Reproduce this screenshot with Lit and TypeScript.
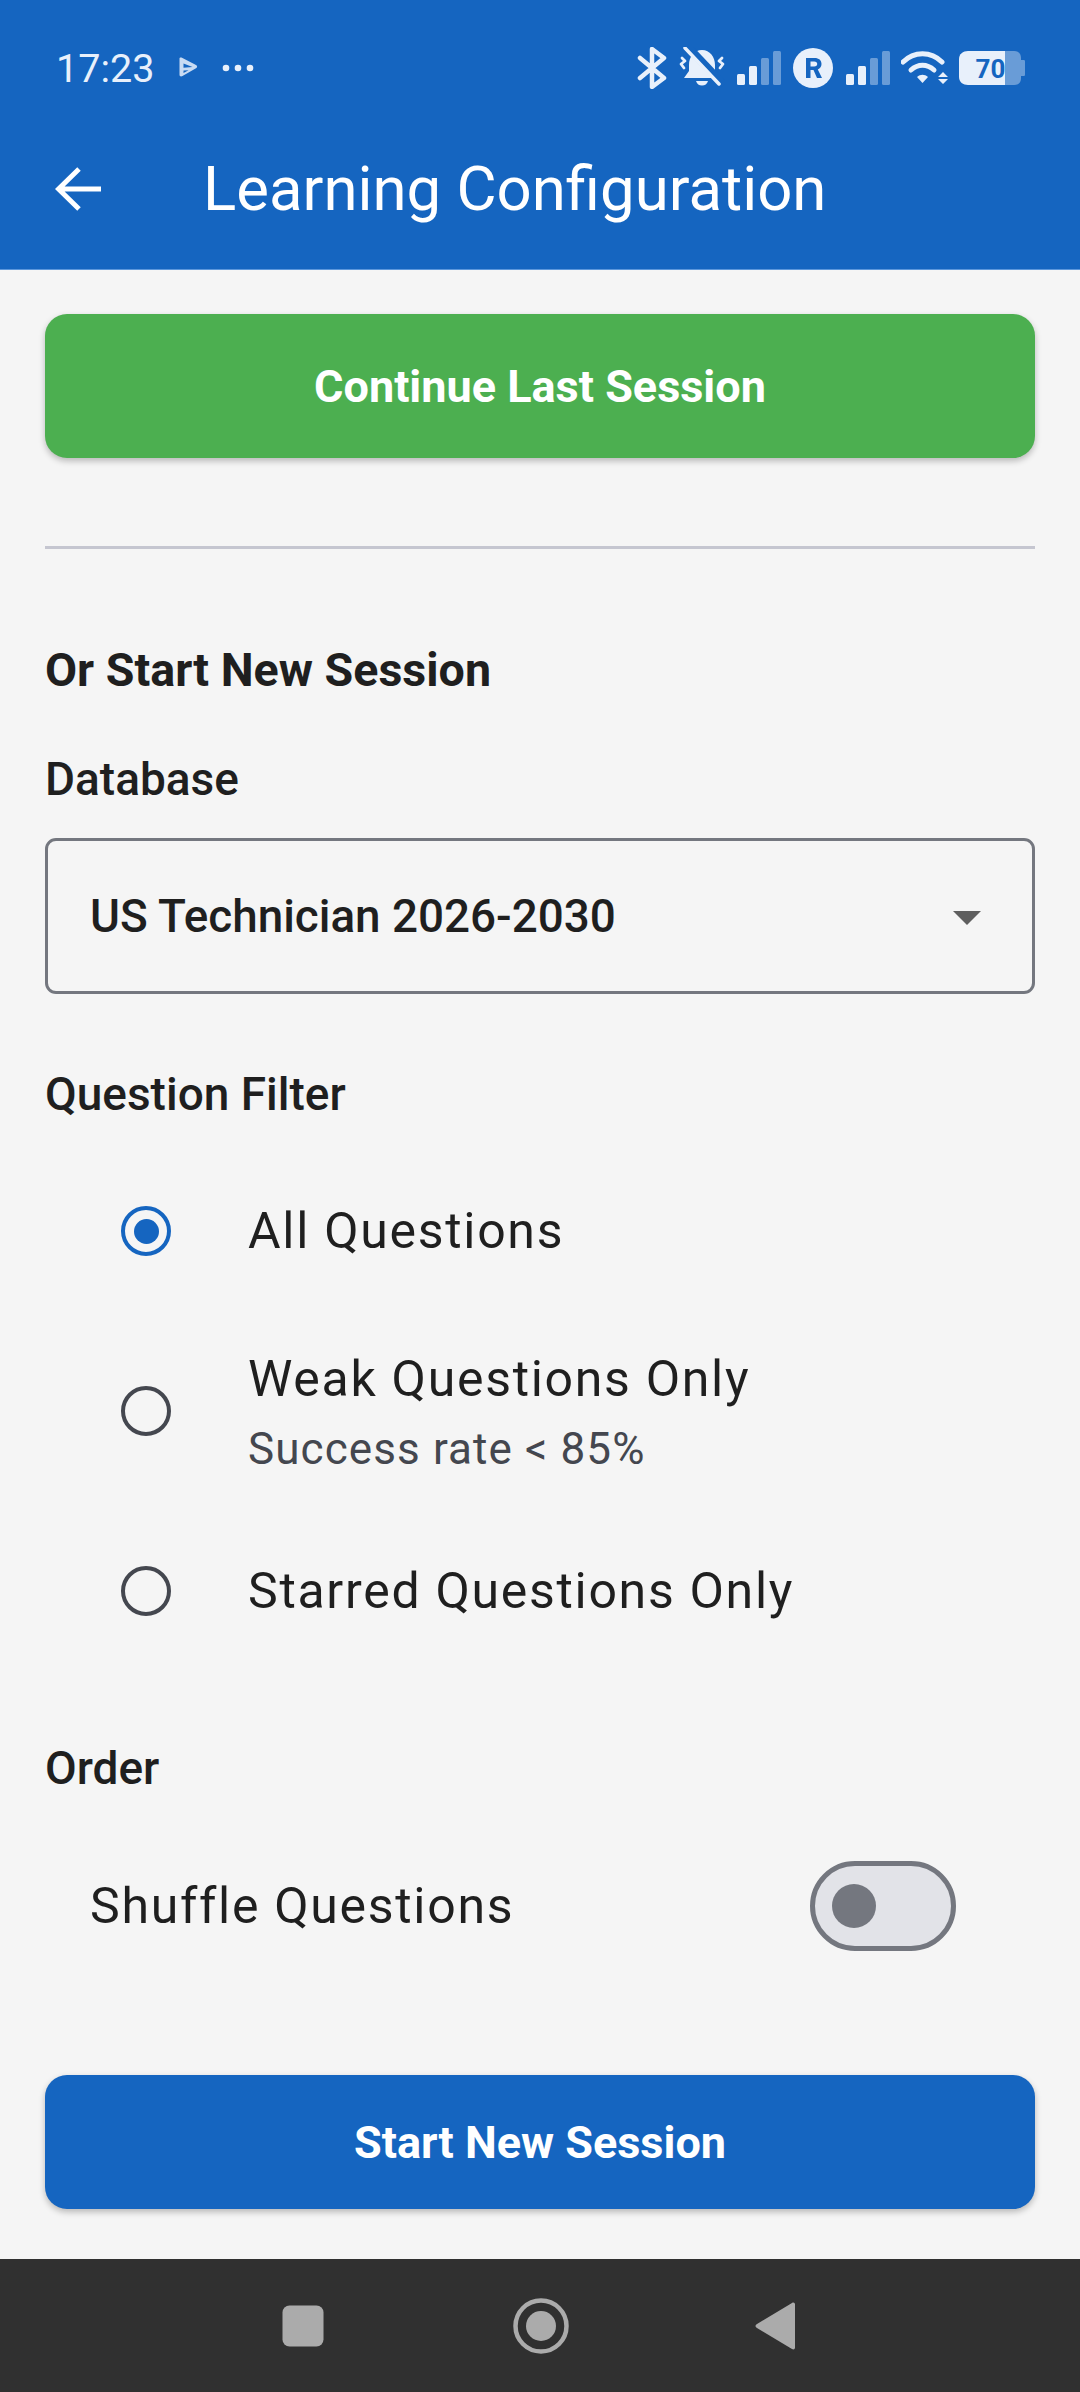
import { css, html, LitElement, svg } from "lit";
import { customElement } from "lit/decorators.js";

const STATUS_ICON = "#e8f0fb";
const bars = (faded: number) =>
  [0, 1, 2, 3].map((i) => {
    const h = [11, 19, 27, 34][i];
    return svg`<rect x=${i * 12} y=${34 - h} width="8" height=${h} rx="1.5" fill=${STATUS_ICON} opacity=${i >= faded ? 0.4 : 1}></rect>`;
  });

@customElement("app-root")
export class AppRoot extends LitElement {
  static styles = css`
    :host {
      display: flex;
      flex-direction: column;
      width: 1080px;
      min-height: 2392px;
      background: #f5f5f5;
      font-family: Roboto, "Noto Sans", sans-serif;
      color: #1f1f1f;
    }

    header {
      background: #1565c0;
      height: 269px;
      border-bottom: 1px solid #5c97dc;
      display: flex;
      flex-direction: column;
    }

    .status {
      height: 134px;
      padding: 2px 0 0 56px;
      display: flex;
      align-items: center;
      color: #e8f0fb;
      font-size: 39.5px;
      box-sizing: border-box;
    }

    .time { width: 122px; }

    .status svg { display: block; flex: none; }

    .status-right {
      margin-left: auto;
      display: flex;
      align-items: center;
      margin-right: 55px;
    }

    .toolbar {
      display: flex;
      align-items: center;
      height: 56px;
      margin-top: 27px;
      padding-left: 55px;
      color: #fff;
      font-size: 61.7px;
    }

    .toolbar svg { margin-right: 102px; flex: none; }

    main {
      flex: 1;
      padding: 44px 45px 0;
      display: flex;
      flex-direction: column;
    }

    .cta {
      border-radius: 22px;
      color: #fff;
      font-weight: 700;
      font-size: 45px;
      display: flex;
      align-items: center;
      justify-content: center;
      box-shadow: 0 3px 6px rgba(0, 0, 0, 0.25);
    }

    .continue { height: 144px; background: #4caf50; }
    .start { height: 134px; background: #1565c0; margin-top: 124px; }

    hr {
      border: 0;
      height: 3px;
      margin: 88px 0 0;
      background: #c5c6d0;
    }

    .heading {
      font-size: 46.6px;
      font-weight: 700;
      line-height: 60px;
      margin-top: 91px;
    }

    .label {
      font-size: 46px;
      font-weight: 500;
      line-height: 50px;
    }

    .select {
      margin-top: 34px;
      height: 156px;
      box-sizing: border-box;
      border: 3px solid #74777f;
      border-radius: 11px;
      padding: 0 51px 0 42px;
      display: flex;
      align-items: center;
      justify-content: space-between;
      font-size: 45.8px;
      font-weight: 500;
    }

    .caret {
      width: 0;
      height: 0;
      border-left: 14px solid transparent;
      border-right: 14px solid transparent;
      border-top: 14px solid #5f5f5f;
      margin-top: 4px;
    }

    .options {
      margin-top: 44px;
      display: flex;
      flex-direction: column;
      gap: 44px;
    }

    .option {
      min-height: 136px;
      display: flex;
      align-items: center;
      padding-left: 76px;
    }

    .radio {
      width: 50px;
      height: 50px;
      box-sizing: border-box;
      border: 4.5px solid #44474f;
      border-radius: 50%;
      margin-right: 77px;
      display: flex;
      align-items: center;
      justify-content: center;
      flex: none;
    }

    .radio.on { border-color: #1565c0; }
    .radio.on::after {
      content: "";
      width: 25px;
      height: 25px;
      border-radius: 50%;
      background: #1565c0;
    }

    .option-title, .shuffle-title {
      font-size: 50px;
      letter-spacing: 1.7px;
      line-height: 60px;
    }

    .option-sub {
      font-size: 44px;
      letter-spacing: 1.1px;
      line-height: 50px;
      color: #44474f;
      margin-top: 15px;
    }

    .order { margin-top: 84px; }

    .shuffle {
      margin-top: 68px;
      padding: 0 79px 0 45px;
      display: flex;
      align-items: center;
      justify-content: space-between;
    }

    .switch {
      width: 146px;
      height: 90px;
      box-sizing: border-box;
      border: 5.5px solid #74777f;
      border-radius: 45px;
      background: #e2e3e8;
      display: flex;
      align-items: center;
      padding-left: 17px;
    }

    .thumb {
      width: 44px;
      height: 44px;
      border-radius: 50%;
      background: #74777f;
    }

    nav {
      height: 133px;
      background: #303030;
      display: flex;
      align-items: center;
      padding-left: 282px;
    }

    nav svg { display: block; }
  `;

  private renderStatusLeft() {
    return html`
      <svg width="20" height="22" viewBox="0 0 20 22" style="margin-right:24px">
        <path d="M1.500 1.500c0-1 1-1.300 2-1L18 8c1.500.8 1.500 2.500 0 3.300L4.500 19c-1.500.8-3 .3-3-1.300z M5.500 6.500l9 3.600-9 .6z M5.500 13.500l5-.3-5 2.800z" fill=${STATUS_ICON} fill-rule="evenodd" opacity="0.85"></path>
      </svg>
      <svg width="32" height="8" viewBox="0 0 32 8">
        <circle cx="4" cy="4" r="3.300" fill=${STATUS_ICON}></circle>
        <circle cx="16" cy="4" r="3.300" fill=${STATUS_ICON}></circle>
        <circle cx="28" cy="4" r="3.300" fill=${STATUS_ICON}></circle>
      </svg>
    `;
  }

  private renderStatusRight() {
    return html`
      <div class="status-right">
        <svg width="30" height="42" viewBox="0 0 30 42" style="margin-right:12px">
          <path d="M3 11l24 20-12 9V2l12 9L3 31" fill="none" stroke=${STATUS_ICON} stroke-width="4.500" stroke-linecap="round" stroke-linejoin="round"></path>
        </svg>
        <svg width="46" height="42" viewBox="0 0 46 42" style="margin-right:12px">
          <path d="M23 3c8 0 13 7 13 15v6l5 7H5l5-7v-6C10 10 15 3 23 3z" fill=${STATUS_ICON}></path>
          <path d="M17 34h12c-1 3-3 4.500-6 4.500S18 37 17 34z" fill=${STATUS_ICON}></path>
          <path d="M9 0l36 38" stroke="#1565c0" stroke-width="8"></path>
          <path d="M6 1l34 36" stroke=${STATUS_ICON} stroke-width="3.500" stroke-linecap="round"></path>
          <path d="M3 11l3 3-4 3 3 4M43 11l-3 3 4 3-3 4" fill="none" stroke=${STATUS_ICON} stroke-width="2.800" stroke-linecap="round" stroke-linejoin="round"></path>
        </svg>
        <svg width="44" height="34" viewBox="0 0 44 34" style="margin-right:12px">${bars(2)}</svg>
        <svg width="40" height="40" viewBox="0 0 40 40" style="margin-right:13px">
          <circle cx="20" cy="20" r="20" fill=${STATUS_ICON}></circle>
          <path d="M13 30V10h8.500c4.500 0 7 2.300 7 6 0 2.600-1.300 4.500-3.700 5.400L29 30h-5l-3.500-8H17.500v8zM17.500 18.500h3.700c2 0 3-.9 3-2.500s-1-2.500-3-2.500h-3.700z" fill="#1565c0" fill-rule="evenodd"></path>
        </svg>
        <svg width="44" height="34" viewBox="0 0 44 34" style="margin-right:11px">${bars(2)}</svg>
        <svg width="48" height="34" viewBox="0 0 48 34" style="margin-right:10px">
          <path d="M2 11C13 0 30 0 41 11" fill="none" stroke=${STATUS_ICON} stroke-width="5" stroke-linecap="round"></path>
          <path d="M10 19c7-6.500 16-6.500 23 0" fill="none" stroke=${STATUS_ICON} stroke-width="5" stroke-linecap="round"></path>
          <path d="M16 26c3.500-3 7.500-3 11 0l-5.500 6z" fill=${STATUS_ICON}></path>
          <path d="M42 21l5 5h-10zM37 28h10l-5 5z" fill=${STATUS_ICON}></path>
        </svg>
        <svg width="66" height="36" viewBox="0 0 66 36">
          <path d="M46 1h9c5 0 7 3 7 7v2h3c1 0 1 1 1 2v12c0 1 0 2-1 2h-3v2c0 4-2 7-7 7h-9z" fill=${STATUS_ICON} opacity="0.4"></path>
          <path d="M46 1H9C4 1 0 4 0 9v18c0 5 4 8 9 8h37z" fill=${STATUS_ICON}></path>
          <text x="31.500" y="28" text-anchor="middle" font-family="Roboto, sans-serif" font-size="26" font-weight="700" fill="#1565c0">70</text>
        </svg>
      </div>
    `;
  }

  render() {
    return html`
      <header>
        <div class="status">
          <span class="time">17:23</span>
          ${this.renderStatusLeft()} ${this.renderStatusRight()}
        </div>
        <div class="toolbar">
          <svg width="46" height="46" viewBox="0 0 46 46">
            <path d="M46 23H4M24 3L3.500 23 24 43" fill="none" stroke="#fff" stroke-width="5"></path>
          </svg>
          <span>Learning Configuration</span>
        </div>
      </header>

      <main>
        <div class="cta continue">Continue Last Session</div>
        <hr />
        <div class="heading">Or Start New Session</div>
        <div class="label" style="margin-top:54px">Database</div>
        <div class="select">
          <span>US Technician 2026-2030</span>
          <span class="caret"></span>
        </div>
        <div class="label" style="margin-top:75px">Question Filter</div>

        <div class="options">
          <div class="option">
            <span class="radio on"></span>
            <div class="option-title">All Questions</div>
          </div>
          <div class="option">
            <span class="radio"></span>
            <div>
              <div class="option-title">Weak Questions Only</div>
              <div class="option-sub">Success rate &lt; 85%</div>
            </div>
          </div>
          <div class="option">
            <span class="radio"></span>
            <div class="option-title">Starred Questions Only</div>
          </div>
        </div>

        <div class="label order">Order</div>
        <div class="shuffle">
          <span class="shuffle-title">Shuffle Questions</span>
          <span class="switch"><span class="thumb"></span></span>
        </div>

        <div class="cta start">Start New Session</div>
      </main>

      <nav>
        <svg width="42" height="42" viewBox="0 0 42 42" style="margin-right:189px">
          <rect x="0.500" y="0.500" width="41" height="41" rx="7" fill="#ababab"></rect>
        </svg>
        <svg width="56" height="56" viewBox="0 0 56 56" style="margin-right:186px">
          <circle cx="28" cy="28" r="25.500" fill="none" stroke="#ababab" stroke-width="4.500"></circle>
          <circle cx="28" cy="28" r="15" fill="#ababab"></circle>
        </svg>
        <svg width="40" height="48" viewBox="0 0 40 48">
          <path d="M37 1c1.500-1 3-.3 3 1.500v43c0 1.800-1.500 2.500-3 1.500L2 26c-2-1-2-3 0-4z" fill="#ababab"></path>
        </svg>
      </nav>
    `;
  }
}
